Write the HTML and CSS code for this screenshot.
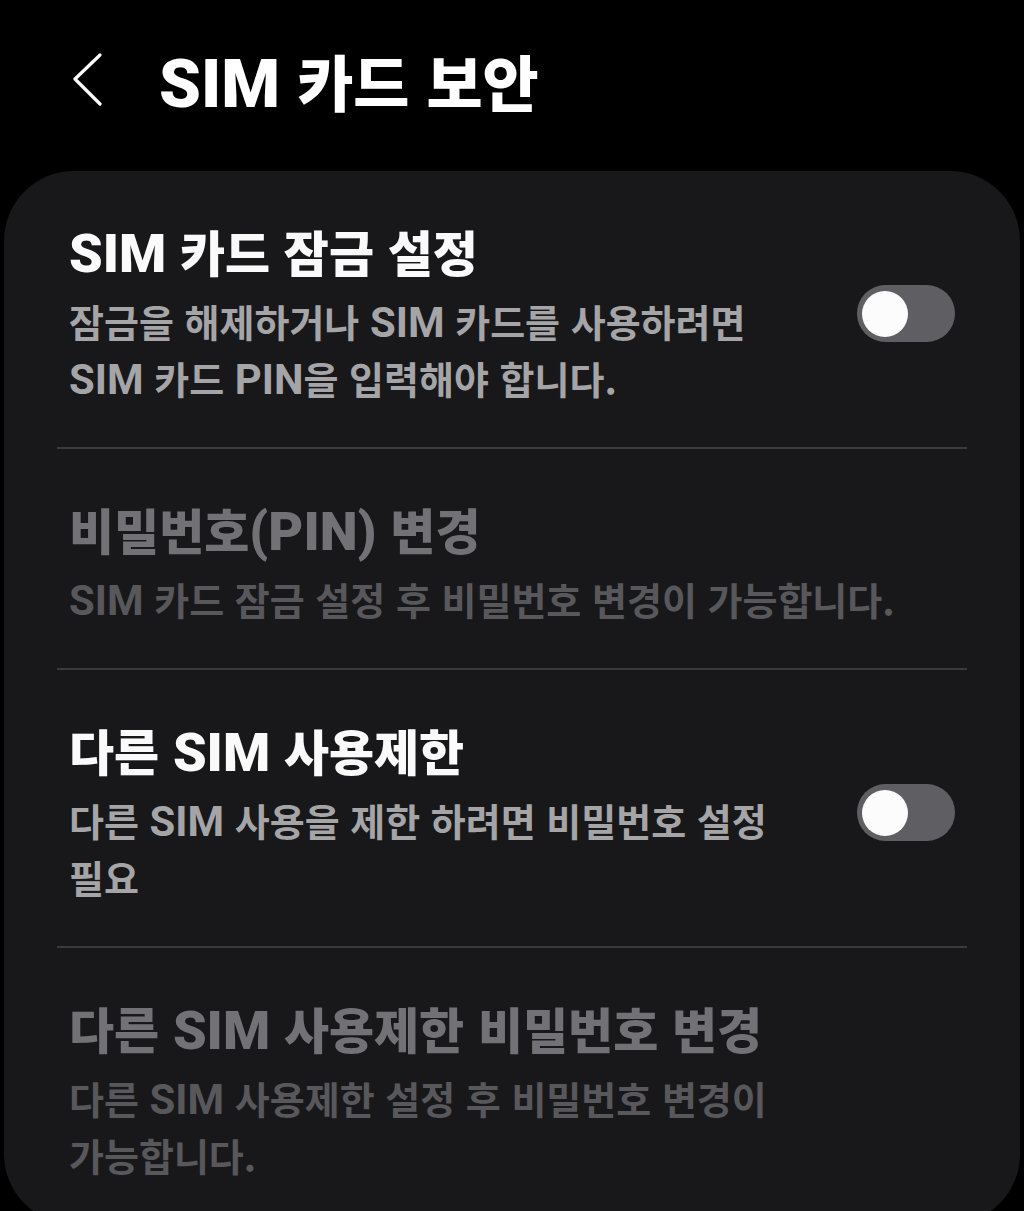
FILE: index.html
```html
<!DOCTYPE html>
<html lang="ko">
<head>
<meta charset="utf-8">
<title>SIM 카드 보안</title>
<link rel="stylesheet" href="styles.css">
</head>
<body>
<div class="screen">
  <header class="appbar">
    <svg class="back" width="30" height="54" viewBox="0 0 30 54" aria-hidden="true">
      <polyline points="27,2 2,26 27,51" fill="none" stroke="#ffffff" stroke-width="3.2" stroke-linecap="round" stroke-linejoin="round"/>
    </svg>
    <h1 class="appbar-title"><span class="en">SIM</span> 카드 보안</h1>
  </header>
  <main class="card">
    <div class="item">
      <div class="item-text">
        <div class="item-title"><span class="en">SIM</span> 카드 잠금 설정</div>
        <div class="item-sub">잠금을 해제하거나 <span class="en">SIM</span> 카드를 사용하려면<br><span class="en">SIM</span> 카드 <span class="en">PIN</span>을 입력해야 합니다.</div>
      </div>
      <div class="switch"><div class="knob"></div></div>
    </div>
    <div class="item disabled">
      <div class="item-text">
        <div class="item-title">비밀번호<span class="en">(PIN)</span> 변경</div>
        <div class="item-sub"><span class="en">SIM</span> 카드 잠금 설정 후 비밀번호 변경이 가능합니다.</div>
      </div>
    </div>
    <div class="item">
      <div class="item-text">
        <div class="item-title">다른 <span class="en">SIM</span> 사용제한</div>
        <div class="item-sub">다른 <span class="en">SIM</span> 사용을 제한 하려면 비밀번호 설정<br>필요</div>
      </div>
      <div class="switch"><div class="knob"></div></div>
    </div>
    <div class="item disabled">
      <div class="item-text">
        <div class="item-title">다른 <span class="en">SIM</span> 사용제한 비밀번호 변경</div>
        <div class="item-sub">다른 <span class="en">SIM</span> 사용제한 설정 후 비밀번호 변경이<br>가능합니다.</div>
      </div>
    </div>
  </main>
</div>
</body>
</html>
```
FILE: styles.css
```css
html, body {
  margin: 0;
  padding: 0;
  background: #000000;
  overflow: hidden;
}

body {
  font-family: "Noto Sans CJK KR", "Noto Sans", sans-serif;
  color: #fafafa;
}

.screen {
  width: 1024px;
  height: 1211px;
  overflow: hidden;
}

.en {
  font-family: Roboto, "Noto Sans CJK KR", sans-serif;
  font-size: 1.1em;
  line-height: 0;
}

.appbar {
  display: flex;
  align-items: flex-start;
  height: 171px;
  box-sizing: border-box;
  padding: 0 0 0 73px;
}

.back {
  display: block;
  flex: none;
  margin-top: 53px;
}

.appbar-title {
  margin: 49px 0 0 56px;
  font-size: 61px;
  line-height: 64px;
  font-weight: 900;
  color: #ffffff;
  white-space: nowrap;
}

.card {
  display: block;
  margin: 0 4px;
  background: #18181b;
  border-radius: 70px;
  padding: 0 53px;
  height: 1053px;
  box-sizing: border-box;
}

.item {
  display: flex;
  align-items: center;
  padding: 50px 12px 41px 12px;
}

.item + .item {
  border-top: 2px solid #3a3a3d;
}

.item-text {
  flex: 1;
  min-width: 0;
}

.item-title {
  font-size: 49px;
  line-height: 60px;
  font-weight: 900;
  color: #fafafa;
  white-space: nowrap;
}

.item-sub {
  margin-top: 11px;
  font-size: 38px;
  line-height: 57px;
  font-weight: 700;
  color: #a5a5a8;
  white-space: nowrap;
}

.disabled .item-title {
  color: #727276;
}

.disabled .item-sub {
  color: #58585c;
}

.switch {
  flex: none;
  width: 98px;
  height: 57px;
  border-radius: 29px;
  background: #5f5f63;
  box-sizing: border-box;
  padding: 5.5px 5px;
}

.knob {
  width: 46px;
  height: 46px;
  border-radius: 50%;
  background: #fcfcfc;
}
```
